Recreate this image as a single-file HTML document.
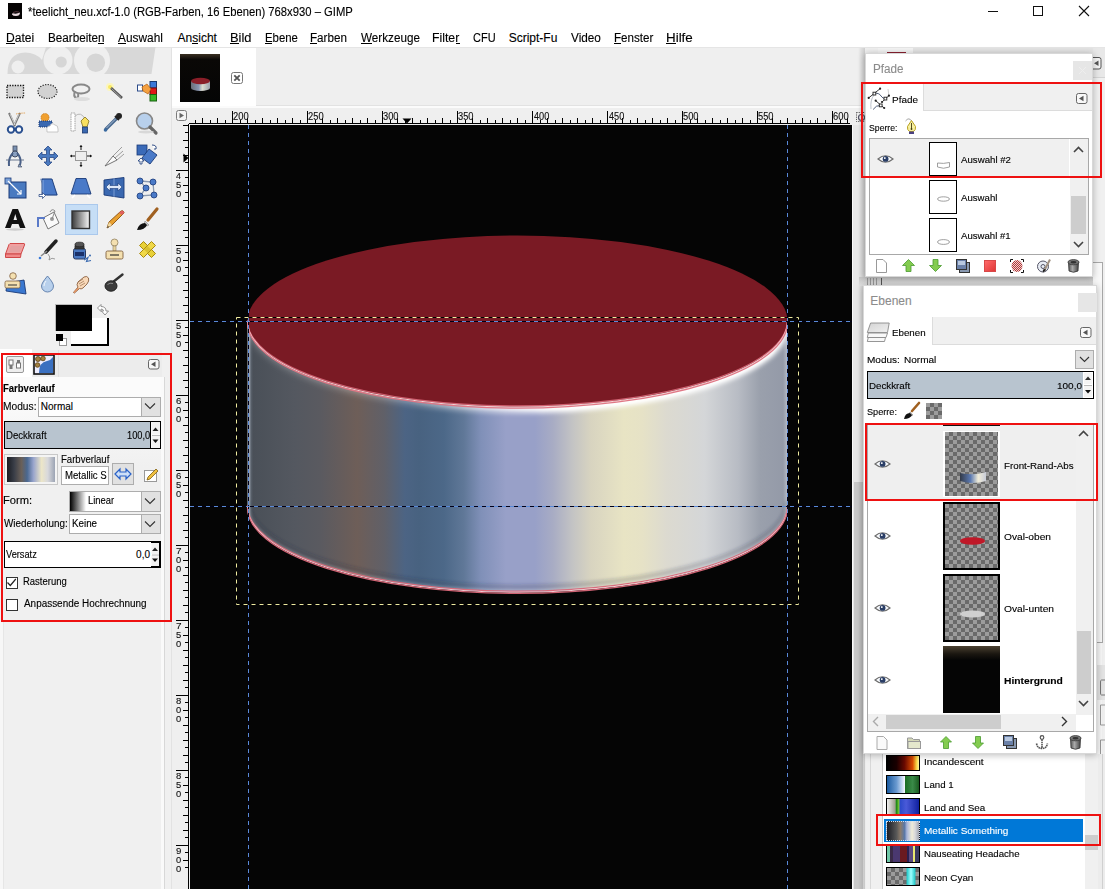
<!DOCTYPE html>
<html><head><meta charset="utf-8">
<style>
*{margin:0;padding:0;box-sizing:border-box}
html,body{width:1105px;height:889px;overflow:hidden;background:#f0f0f0;font-family:"Liberation Sans",sans-serif;color:#000;position:relative}
.a{position:absolute}
.t{position:absolute;white-space:nowrap;font-size:12px;line-height:1;transform-origin:0 0;-webkit-text-stroke:0.12px currentColor}
svg{position:absolute;overflow:visible}
</style></head><body>

<div class="a" style="left:0px;top:0px;width:1105px;height:24px;background:#fff"></div>
<div class="a" style="left:8px;top:3px;width:14px;height:16px;background:#050303"></div>
<svg style="left:8px;top:3px" width="14" height="16"><defs><filter id="tib"><feGaussianBlur stdDeviation="0.6"/></filter></defs><path d="M4 11.5 Q4 9.5 6 10.5 Q9 11 12 9.5 Q12 13 8 13 Q5 13 4 11.5Z" fill="#e8d8dc" filter="url(#tib)"/><path d="M5 9.5 Q8 8 11 9" stroke="#503038" fill="none"/></svg>
<div class="t" style="left:28.33px;top:6.38px;font-size:12px;color:#000;transform:scaleX(0.9383);">*teelicht_neu.xcf-1.0 (RGB-Farben, 16 Ebenen) 768x930 – GIMP</div>
<div class="a" style="left:988px;top:11px;width:10px;height:1px;background:#111"></div>
<div class="a" style="left:1033px;top:6px;width:10px;height:10px;border:1px solid #111"></div>
<svg style="left:1079px;top:6px" width="10" height="10"><path d="M0 0L10 10M10 0L0 10" stroke="#111" stroke-width="1.1"/></svg>
<div class="a" style="left:0px;top:24px;width:1105px;height:23px;background:#fff"></div>
<div class="a" style="left:0px;top:47px;width:1105px;height:1px;background:#e5e5e5"></div>
<div class="t" style="left:6.33px;top:32.38px;font-size:12px;color:#000;transform:scaleX(1.0069);">Datei</div>
<div class="a" style="left:6.3px;top:43px;width:8.7px;height:1px;background:#000"></div>
<div class="t" style="left:47.56px;top:32.38px;font-size:12px;color:#000;transform:scaleX(0.9755);">Bearbeiten</div>
<div class="a" style="left:97.7px;top:43px;width:6.5px;height:1px;background:#000"></div>
<div class="t" style="left:118.40px;top:32.38px;font-size:12px;color:#000;transform:scaleX(0.9892);">Auswahl</div>
<div class="a" style="left:118.4px;top:43px;width:7.9px;height:1px;background:#000"></div>
<div class="t" style="left:177.60px;top:32.38px;font-size:12px;color:#000;">Ansicht</div>
<div class="a" style="left:192.2px;top:43px;width:6.0px;height:1px;background:#000"></div>
<div class="t" style="left:230.27px;top:32.38px;font-size:12px;color:#000;transform:scaleX(1.0746);">Bild</div>
<div class="a" style="left:230.3px;top:43px;width:8.6px;height:1px;background:#000"></div>
<div class="t" style="left:264.79px;top:32.38px;font-size:12px;color:#000;transform:scaleX(0.9494);">Ebene</div>
<div class="a" style="left:264.8px;top:43px;width:7.6px;height:1px;background:#000"></div>
<div class="t" style="left:310.27px;top:32.38px;font-size:12px;color:#000;transform:scaleX(0.9713);">Farben</div>
<div class="a" style="left:310.3px;top:43px;width:7.1px;height:1px;background:#000"></div>
<div class="t" style="left:360.94px;top:32.38px;font-size:12px;color:#000;transform:scaleX(0.9736);">Werkzeuge</div>
<div class="a" style="left:360.9px;top:43px;width:11.0px;height:1px;background:#000"></div>
<div class="t" style="left:432.32px;top:32.38px;font-size:12px;color:#000;transform:scaleX(1.0235);">Filter</div>
<div class="a" style="left:455.5px;top:43px;width:4.1px;height:1px;background:#000"></div>
<div class="t" style="left:472.85px;top:32.38px;font-size:12px;color:#000;transform:scaleX(0.9154);">CFU</div>
<div class="t" style="left:508.66px;top:32.38px;font-size:12px;color:#000;">Script-Fu</div>
<div class="t" style="left:571.04px;top:32.38px;font-size:12px;color:#000;transform:scaleX(0.9820);">Video</div>
<div class="t" style="left:614.17px;top:32.38px;font-size:12px;color:#000;transform:scaleX(0.9676);">Fenster</div>
<div class="a" style="left:614.2px;top:43px;width:7.1px;height:1px;background:#000"></div>
<div class="t" style="left:666.23px;top:32.38px;font-size:12px;color:#000;transform:scaleX(1.1156);">Hilfe</div>
<div class="a" style="left:666.2px;top:43px;width:9.7px;height:1px;background:#000"></div>
<div class="a" style="left:161px;top:377px;width:3px;height:512px;background:#fafafa"></div>
<div class="a" style="left:164px;top:377px;width:1px;height:512px;background:#d8d8d8"></div>
<div class="a" style="left:171px;top:48px;width:1px;height:841px;background:#e2e2e2"></div>
<div class="a" style="left:0px;top:622px;width:3px;height:267px;background:#f7f7f7"></div>
<div class="a" style="left:3px;top:622px;width:1px;height:267px;background:#e6e6e6"></div>
<svg style="left:0;top:44px" width="165" height="32" viewBox="0 44 165 32">
<defs><clipPath id="wbc"><rect x="0" y="47" width="165" height="27"/></clipPath></defs>
<g clip-path="url(#wbc)">
<path d="M7.5 74 Q7.5 53 25 52.5 Q36 52.5 42 60 L46 47 L155.5 47 L151.5 74 Z" fill="#d8d8d8"/>
<circle cx="18" cy="67" r="6.5" fill="#efefef"/>
<circle cx="58" cy="60" r="14.5" fill="#efefef"/>
<circle cx="61.2" cy="62" r="5.6" fill="#d6d6d6"/>
<circle cx="92" cy="60.5" r="18" fill="#efefef"/>
<circle cx="95.8" cy="62.7" r="9.3" fill="#d6d6d6"/>
</g></svg>
<svg style="left:6px;top:84px" width="19" height="15" viewBox="0 0 19 15"><rect x="1" y="1.5" width="16.5" height="12" fill="#d2d2d2" stroke="#111" stroke-width="1.3" stroke-dasharray="1.3 1.3"/></svg>
<svg style="left:37px;top:83px" width="22" height="17" viewBox="0 0 22 17"><ellipse cx="10.5" cy="8.5" rx="9.5" ry="7" fill="#d2d2d2" stroke="#222" stroke-width="1.2" stroke-dasharray="1.2 1.4"/></svg>
<svg style="left:70px;top:83px" width="22" height="18" viewBox="0 0 22 18"><ellipse cx="11" cy="6" rx="8.5" ry="4.5" fill="none" stroke="#888" stroke-width="2"/><path d="M5 8 Q3 13 6 15 Q9 15 8 11" fill="none" stroke="#888" stroke-width="2"/><ellipse cx="12" cy="16" rx="8" ry="2" fill="#ddd"/></svg>
<svg style="left:105px;top:82px" width="20" height="18" viewBox="0 0 20 18"><circle cx="5" cy="5" r="4" fill="#fff8b0" opacity="0.8"/><circle cx="5" cy="5" r="2" fill="#f8e860"/><path d="M6 6 L17 16" stroke="#555" stroke-width="2.6"/><path d="M6.5 6.5 L16 15.5" stroke="#aaa" stroke-width="0.9"/></svg>
<svg style="left:137px;top:81px" width="22" height="21" viewBox="0 0 22 21"><rect x="13" y="0.5" width="6.5" height="6.5" fill="#3a78d8" stroke="#1a3a70"/><rect x="13" y="7" width="6.5" height="6.5" fill="#e01818" stroke="#701010"/><rect x="13" y="13.5" width="6.5" height="6.5" fill="#38b828" stroke="#186010"/><rect x="0.5" y="4" width="5" height="6" fill="#fff" stroke="#2a4a8a"/><path d="M5 6 L10 3 L14 8 L11 13 L6 10 Z" fill="#f4a040" stroke="#b06010" stroke-width="0.7"/></svg>
<svg style="left:6px;top:112px" width="21" height="22" viewBox="0 0 21 22"><path d="M3 1 L9 14 M14 1 L8 14" stroke="#777" stroke-width="2" fill="none"/><path d="M4 2 L9 13 M13 2 L8 13" stroke="#ddd" stroke-width="0.8"/><path d="M10 2 Q14 1 20 1" stroke="#e09030" stroke-dasharray="1 1" fill="none"/><circle cx="5" cy="17.5" r="3.2" fill="#fff" stroke="#2a5090" stroke-width="2"/><circle cx="13" cy="17.5" r="3.2" fill="#fff" stroke="#2a5090" stroke-width="2"/></svg>
<svg style="left:38px;top:112px" width="21" height="21" viewBox="0 0 21 21"><circle cx="7" cy="5.5" r="4" fill="#f0a030" stroke="#c07010" stroke-width="0.8" stroke-dasharray="1 0.8"/><rect x="1" y="9" width="13" height="6" fill="#3a68b0" stroke="#1a3870" stroke-dasharray="1 1"/><path d="M9 19 Q8 14 12 14 Q13 10 17 13 Q20 13 20 17 L20 20 L9 20 Z" fill="#fff" stroke="#bbb" stroke-width="0.8"/></svg>
<svg style="left:70px;top:112px" width="21" height="22" viewBox="0 0 21 22"><rect x="1" y="1" width="4" height="18" fill="#fff" stroke="#999" stroke-width="0.9" stroke-dasharray="1.5 0.8"/><path d="M5 4 Q11 -1 15 7" fill="none" stroke="#aaa" stroke-width="0.8"/><path d="M11 9 L15 5 L19 9 L17 15 L13 15 Z" fill="#f8e060" stroke="#807020" stroke-width="0.8"/><rect x="12.5" y="15" width="5" height="6" fill="#3a68b0" stroke="#1a3870" stroke-width="0.8"/></svg>
<svg style="left:103px;top:112px" width="20" height="20" viewBox="0 0 20 20"><path d="M3 17 L14 6" stroke="#4a6a90" stroke-width="3.2" stroke-linecap="round"/><path d="M3.5 16 L13 6.5" stroke="#b0c4dc" stroke-width="0.9"/><circle cx="16" cy="4" r="3" fill="#222"/><path d="M12 4 L16 8" stroke="#222" stroke-width="2"/><circle cx="2.5" cy="18" r="1.8" fill="#3a6aa0"/></svg>
<svg style="left:135px;top:112px" width="23" height="22" viewBox="0 0 23 22"><circle cx="9.5" cy="9" r="8" fill="#b8d0ec" stroke="#888" stroke-width="1.6"/><path d="M15 15 L21 21" stroke="#666" stroke-width="3.2" stroke-linecap="round"/><ellipse cx="11" cy="20" rx="8" ry="1.5" fill="#d8d8d8"/></svg>
<svg style="left:6px;top:145px" width="19" height="23" viewBox="0 0 19 23"><rect x="7" y="1" width="4" height="5" fill="#7890b0" stroke="#404a60" stroke-width="0.8"/><circle cx="9" cy="9" r="3" fill="#8aa0c0" stroke="#404a60"/><path d="M7 8 Q2 13 3 21 M11 8 Q16 13 14 20" fill="none" stroke="#4a6088" stroke-width="2"/><path d="M0 15 L18 15" stroke="#4a5a78" stroke-width="0.8"/><path d="M13 19 L16 22 L12 22 Z" fill="#8aa0c0" stroke="#404a60" stroke-width="0.6"/></svg>
<svg style="left:37px;top:145px" width="22" height="22" viewBox="0 0 22 22"><path d="M11 1 L15 5 L12.5 5 L12.5 9.5 L17 9.5 L17 7 L21 11 L17 15 L17 12.5 L12.5 12.5 L12.5 17 L15 17 L11 21 L7 17 L9.5 17 L9.5 12.5 L5 12.5 L5 15 L1 11 L5 7 L5 9.5 L9.5 9.5 L9.5 5 L7 5 Z" fill="#4a7ac0" stroke="#2a4a88" stroke-width="0.8"/></svg>
<svg style="left:70px;top:145px" width="22" height="22" viewBox="0 0 22 22"><rect x="5.5" y="6.5" width="11" height="9" fill="#eee" stroke="#999"/><path d="M11 0.5 L11 5 M11 17 L11 21.5 M0.5 11 L5 11 M17 11 L21.5 11" stroke="#111" stroke-width="1"/><path d="M9.5 2 L11 0 L12.5 2Z M9.5 20 L11 22 L12.5 20Z M2 9.5 L0 11 L2 12.5Z M20 9.5 L22 11 L20 12.5Z" fill="#111"/></svg>
<svg style="left:103px;top:145px" width="22" height="22" viewBox="0 0 22 22"><path d="M2 21 L10 11 L14 15 Z" fill="#fafafa" stroke="#666" stroke-width="0.9"/><path d="M10 11 L19 2 M12 13 L20 6 M14 15 L21 9" stroke="#888" stroke-width="0.8" fill="none"/></svg>
<svg style="left:136px;top:144px" width="22" height="24" viewBox="0 0 22 24"><rect x="1" y="1" width="10" height="10" fill="#3a6ab8" stroke="#1a3a78" stroke-width="0.8"/><path d="M6 14 L13 5 L21 11 L14 20 Z" fill="#4a7ac8" stroke="#1a3a78" stroke-width="0.9"/><path d="M16 1 Q21 1 20 5 L18 5" fill="#fff" stroke="#1a3a78" stroke-width="0.9"/><path d="M2 17 L5 14 L8 17 L6 17 L6 20 L4 20 L4 17 Z" fill="#fff" stroke="#1a3a78" stroke-width="0.8"/></svg>
<svg style="left:4px;top:177px" width="23" height="22" viewBox="0 0 23 22"><rect x="5" y="5" width="17" height="16" fill="#4a7ac0" stroke="#1a3a78"/><rect x="1" y="1" width="6" height="6" fill="#7aa0d8" stroke="#1a3a78" stroke-width="0.8"/><path d="M4 4 L17 17" stroke="#fff" stroke-width="1.2"/><path d="M17 13 L17 17 L13 17" stroke="#fff" stroke-width="1.2" fill="none"/></svg>
<svg style="left:38px;top:177px" width="21" height="22" viewBox="0 0 21 22"><path d="M2.5 2 L13 2 L19.5 18 L9 18 Z" fill="#dde6f4" stroke="#8aa0c8" stroke-width="0.8"/><path d="M4 2 L14 2 L19 18 L4 18 Z" fill="#4a7ac8" stroke="#1a3a78" stroke-width="0.9"/><path d="M5 3 L5 17" stroke="#9ab8e8" stroke-width="0.8"/><path d="M1 17.5 L4.5 17.5 L4.5 15.5 L7.5 18.5 L4.5 21.5 L4.5 19.5 L1 19.5 Z" fill="#fff" stroke="#1a3a78" stroke-width="0.7"/></svg>
<svg style="left:70px;top:177px" width="22" height="22" viewBox="0 0 22 22"><path d="M6 1.5 L16 1.5 L21 17 L1 17 Z" fill="#4a7ac8" stroke="#1a3a78" stroke-width="0.9"/><path d="M2 21 L5 18 M17 18 L20 21" stroke="#fff" stroke-width="1.5"/></svg>
<svg style="left:103px;top:177px" width="22" height="21" viewBox="0 0 22 21"><path d="M1 3 L21 0.5 L21 21 L1 18 Z" fill="#3a68b0" stroke="#1a3a78" stroke-width="0.9"/><path d="M11 1 L11 20" stroke="#8aaadc" stroke-width="0.8"/><path d="M3 10 L7 6 L7 8.5 L15 8.5 L15 6 L19 10 L15 14 L15 11.5 L7 11.5 L7 14 Z" fill="#dde8f8" stroke="#1a3a78" stroke-width="0.6"/></svg>
<svg style="left:136px;top:177px" width="22" height="22" viewBox="0 0 22 22"><path d="M4 4 L17 5 L18 18 L4 19 L10 11 Z" fill="none" stroke="#8a9ab0" stroke-width="1.3"/><g fill="#4a7ac8" stroke="#1a3a78" stroke-width="0.8"><circle cx="4" cy="4" r="3"/><circle cx="17" cy="5" r="3"/><circle cx="10" cy="11" r="3"/><circle cx="4" cy="19" r="3"/><circle cx="18" cy="18" r="3"/></g></svg>
<div class="a" style="left:65px;top:204px;width:33px;height:31px;background:#c6def6;border:1px solid #aac8ec"></div>
<svg style="left:4px;top:208px" width="23" height="23" viewBox="0 0 23 23"><path d="M1 20 L8.5 1 L14 1 L21.5 20 L16 20 L14.5 16 L8 16 L6.5 20 Z M9.5 12 L13 12 L11.3 6 Z" fill="#111" fill-rule="evenodd"/><ellipse cx="11" cy="21.5" rx="9" ry="1.2" fill="#ccc"/></svg>
<svg style="left:36px;top:208px" width="24" height="24" viewBox="0 0 24 24"><path d="M7 10 L18 4 L23 15 L12 21 Z" fill="#fafafa" stroke="#777" stroke-width="1"/><circle cx="16" cy="11" r="2" fill="#999"/><path d="M14 4 Q16 0 19 3 L16 11" fill="none" stroke="#888" stroke-width="1"/><path d="M2 19 L2 10 L9 10" fill="none" stroke="#5a7ac8" stroke-width="2"/></svg>
<svg style="left:71px;top:210px" width="20" height="20" viewBox="0 0 20 20"><defs><linearGradient id="tgg" x1="0" x2="1"><stop offset="0" stop-color="#3a3a3a"/><stop offset="1" stop-color="#f8f8f8"/></linearGradient></defs><rect x="1" y="1" width="17.5" height="17.5" fill="url(#tgg)" stroke="#333" stroke-width="1.4"/></svg>
<svg style="left:104px;top:209px" width="22" height="22" viewBox="0 0 22 22"><path d="M3 19 L5 13 L17 2 Q19 1 20 3 L20 4 L8 16 Z" fill="#e8a030" stroke="#8a5010" stroke-width="0.9"/><path d="M17 2 Q19 1 20 3 L20 4 L18 6 L15 4Z" fill="#e06060"/><path d="M3 19 L5 13 L8 16 Z" fill="#f0d8a0"/><path d="M3 19 L4 17 L5 18Z" fill="#222"/></svg>
<svg style="left:136px;top:208px" width="22" height="24" viewBox="0 0 22 24"><path d="M12 12 L21 1" stroke="#a06020" stroke-width="3.2" stroke-linecap="round"/><path d="M9 13 L13 17 L11 18 L8 16Z" fill="#ccc" stroke="#888" stroke-width="0.6"/><path d="M1 22 Q3 15 9 15 L11 17 Q9 22 1 22Z" fill="#111"/></svg>
<svg style="left:4px;top:242px" width="22" height="18" viewBox="0 0 22 18"><path d="M6 1.5 L20 1.5 Q21 1.5 20.5 3 L17 12 L1.5 12 L5 2.5Z" fill="#f0a0a0" stroke="#d04848" stroke-width="1"/><path d="M1.5 12 L17 12 L16.5 15.5 L1.5 15.5Z" fill="#f08888" stroke="#d04848" stroke-width="1"/><path d="M7 4 L18 4 L15.5 10 L5 10Z" fill="#d8a0a0" opacity="0.5"/></svg>
<svg style="left:37px;top:239px" width="22" height="23" viewBox="0 0 22 23"><path d="M9 13 L19 2" stroke="#222" stroke-width="3.5" stroke-linecap="round"/><path d="M4 17 L10 12" stroke="#888" stroke-width="1.5"/><path d="M11 15 Q14 18 12 21 Q15 18 18 20" fill="none" stroke="#888" stroke-width="0.8"/><circle cx="3" cy="19" r="1.3" fill="#3a7ad8"/></svg>
<svg style="left:70px;top:240px" width="22" height="24" viewBox="0 0 22 24"><rect x="3.5" y="8.5" width="12" height="10.5" rx="2" fill="#4a78c0" stroke="#2a3a60"/><rect x="5" y="12" width="9" height="4" fill="#1a3068"/><path d="M5 9 L5 5.5 Q9.5 3 14 5.5 L14 9Z" fill="#3a3a3a" stroke="#222" stroke-width="0.8"/><ellipse cx="9.5" cy="4.5" rx="4.5" ry="2.3" fill="#555" stroke="#222" stroke-width="0.8"/><path d="M14 20 L18 17.5 L16.5 21.5 L21 20.5" fill="none" stroke="#3a6ab0" stroke-width="1.2"/><circle cx="20" cy="15.5" r="1" fill="#3a6ab0"/></svg>
<svg style="left:104px;top:238px" width="21" height="24" viewBox="0 0 21 24"><circle cx="10.5" cy="4.5" r="3.5" fill="#f4e0b0" stroke="#908060" stroke-width="0.8"/><rect x="9" y="8" width="3" height="5" fill="#e8d4a0" stroke="#908060" stroke-width="0.6"/><rect x="2" y="13" width="17" height="8" rx="1.5" fill="#f4e0b0" stroke="#806040" stroke-width="0.9"/><path d="M6 17 L15 17" stroke="#333" stroke-width="1.2"/></svg>
<svg style="left:136px;top:238px" width="23" height="24" viewBox="0 0 23 24"><path d="M3.5 7.5 L7.5 3.5 L19.5 15.5 L15.5 19.5 Z" fill="#e8d038" stroke="#a88a10" stroke-width="1" stroke-linejoin="round"/><path d="M15.5 3.5 L19.5 7.5 L7.5 19.5 L3.5 15.5 Z" fill="#f0d848" stroke="#a88a10" stroke-width="1" stroke-linejoin="round"/><rect x="9" y="9" width="5" height="5" transform="rotate(45 11.5 11.5)" fill="#d8c030"/></svg>
<svg style="left:4px;top:272px" width="24" height="25" viewBox="0 0 24 25"><path d="M3 11 L20 8 L22 22 L2 19 Z" fill="#3a78d0" stroke="#1a3a78" stroke-width="0.9"/><circle cx="9" cy="4" r="3.3" fill="#f4e0b0" stroke="#806040" stroke-width="0.8"/><rect x="1" y="9" width="15" height="7" rx="1.5" fill="#f4e0b0" stroke="#806040" stroke-width="0.8"/><path d="M4 13 L13 13" stroke="#333"/></svg>
<svg style="left:40px;top:275px" width="15" height="17" viewBox="0 0 15 17"><path d="M7.5 1 Q13.5 8 13.5 11 A6 6 0 0 1 1.5 11 Q1.5 8 7.5 1 Z" fill="#b8d0ec" stroke="#5a7aa8" stroke-width="0.9"/><path d="M4 11 Q4 8 6 6" stroke="#fff" stroke-width="0.8" fill="none"/></svg>
<svg style="left:72px;top:275px" width="18" height="19" viewBox="0 0 18 19"><path d="M1.5 17.5 L6 12 Q4 10 6 7 L12 2 Q15 0.5 16.5 3 Q17.5 6 15 9 L11 13 Q9 14.5 7.5 13.5 L2.5 18 Z" fill="#f8d8b8" stroke="#8a6040" stroke-width="0.9"/><path d="M6 7 L11 4 M7 9 L12 6 M8 11 L13 8" stroke="#8a6040" stroke-width="0.6"/><path d="M2 17.5 L6.5 13" stroke="#e09060" stroke-width="1.4"/></svg>
<svg style="left:104px;top:273px" width="20" height="20" viewBox="0 0 20 20"><path d="M9 9 L18.5 1.5" stroke="#333" stroke-width="2.4" stroke-linecap="round"/><ellipse cx="7" cy="13" rx="6" ry="5.2" fill="#3c3c3c" stroke="#222"/><path d="M3.5 11.5 Q6 9.5 9 10.5" stroke="#8a8a8a" fill="none"/></svg>
<div class="a" style="left:71px;top:318px;width:38px;height:28px;background:#fff;border-right:2px solid #000;border-bottom:2px solid #000"></div>
<div class="a" style="left:55px;top:304px;width:37px;height:27px;background:#000;border-top:1px solid #bbb;border-left:1px solid #bbb"></div>
<div class="a" style="left:59px;top:338px;width:8px;height:8px;background:#fff;border:1px solid #999"></div>
<div class="a" style="left:56px;top:334px;width:7px;height:7px;background:#000"></div>
<svg style="left:96px;top:303px" width="14" height="14" viewBox="0 0 14 14"><path d="M1.5 5 L5 1.5 L5 3.5 Q10 3.5 10 8 L12.5 8 L9 12 L5.5 8 L7.5 8 Q7.5 6 5 6 L5 8.5 Z" fill="#fff" stroke="#888" stroke-width="0.9"/></svg>
<div class="a" style="left:0px;top:349px;width:32px;height:28px;background:#fff"></div>
<div class="a" style="left:32px;top:350px;width:130px;height:27px;background:#ececec"></div>
<div class="a" style="left:58px;top:350px;width:1px;height:27px;background:#e0e0e0"></div>
<div class="a" style="left:3px;top:377px;width:158px;height:90px;background:linear-gradient(#fbfbfb,#fbfbfb 20%,#f0f0f0)"></div>
<svg style="left:6px;top:356px" width="18" height="17" viewBox="0 0 18 17"><rect x="0.5" y="0.5" width="17" height="16" rx="1.5" fill="#eee" stroke="#999"/><rect x="3" y="4" width="4" height="5" fill="#fff" stroke="#777"/><rect x="3.5" y="9" width="3" height="4" fill="#777"/><rect x="11" y="4" width="3" height="3" fill="#777"/><rect x="10.5" y="7" width="4" height="5" fill="#fff" stroke="#777"/></svg>
<svg style="left:33px;top:354px" width="22" height="21" viewBox="0 0 22 21"><rect x="1" y="1" width="20" height="19" fill="#eef" stroke="#111" stroke-width="1.6"/><path d="M6 19 Q6 8 14 7 Q18 6 20 3 L20 19 Z" fill="#3a70c0"/><circle cx="5" cy="5" r="2.5" fill="#a08040" stroke="#604010" stroke-width="0.8"/><circle cx="10" cy="4.5" r="2.3" fill="#a08040" stroke="#604010" stroke-width="0.8"/><circle cx="4.5" cy="11" r="2.3" fill="#a08040" stroke="#604010" stroke-width="0.8"/></svg>
<svg style="left:148px;top:359px" width="12" height="11" viewBox="0 0 12 11"><rect x="0.5" y="0.5" width="10.5" height="9.5" rx="2" fill="#f8f8f8" stroke="#666"/><path d="M3 5.2 L7.5 2.5 L7.5 8Z" fill="#555"/></svg>
<div class="t" style="left:3.18px;top:384.10px;font-size:10px;color:#000;font-weight:bold;transform:scaleX(0.9508);">Farbverlauf</div>
<div class="t" style="left:2.98px;top:402.10px;font-size:10px;color:#000;transform:scaleX(1.0209);">Modus:</div>
<div class="a" style="left:38px;top:397px;width:123px;height:20px;background:#fff;border:1px solid #adadad"></div>
<div class="a" style="left:141px;top:398px;width:19px;height:18px;background:#e1e1e1;border-left:1px solid #adadad"></div>
<svg style="left:144px;top:402px" width="12" height="8"><path d="M1 1.5 L6 6.5 L11 1.5" fill="none" stroke="#333" stroke-width="1.1"/></svg>
<div class="t" style="left:40.80px;top:402.10px;font-size:10px;color:#000;">Normal</div>
<div class="a" style="left:4px;top:421px;width:147px;height:28px;background:#b8c4cf;border:1px solid #000"></div>
<div class="t" style="left:5.53px;top:430.60px;font-size:10px;color:#000;transform:scaleX(0.9601);">Deckkraft</div>
<div class="t" style="left:126.81px;top:430.60px;font-size:10px;color:#000;transform:scaleX(0.9247);">100,0</div>
<div class="a" style="left:151px;top:421px;width:10px;height:28px;background:#fff;border:1px solid #000;border-left:none"></div>
<svg style="left:151px;top:421px" width="10" height="28"><rect x="0.5" y="1" width="8.5" height="12.5" fill="#f2f2f2"/><rect x="0.5" y="14.5" width="8.5" height="12.5" fill="#f2f2f2"/><path d="M1.5 9.9 L4.5 6.4 L7.5 9.9Z" fill="#222"/><path d="M1.5 18.599999999999998 L4.5 22.099999999999998 L7.5 18.599999999999998Z" fill="#111"/><rect x="1" y="14.0" width="8" height="1" fill="#bbb"/></svg>
<div class="a" style="left:4px;top:454px;width:54px;height:31px;background:#f4f4f4;border:1px solid #c8c8c8"></div>
<svg style="left:7px;top:457px" width="48" height="25"><defs><linearGradient id="mgr" x1="0" x2="1">
<stop offset="0" stop-color="#1a1c22"/><stop offset="0.15" stop-color="#3a3e48"/><stop offset="0.3" stop-color="#6a6058"/><stop offset="0.42" stop-color="#4a6890"/><stop offset="0.55" stop-color="#98a4cc"/><stop offset="0.72" stop-color="#ece6c8"/><stop offset="0.85" stop-color="#d8d8dc"/><stop offset="1" stop-color="#9ca4b4"/></linearGradient></defs><rect width="48" height="25" fill="url(#mgr)"/></svg>
<div class="t" style="left:60.64px;top:455.10px;font-size:10px;color:#000;transform:scaleX(0.9558);">Farbverlauf</div>
<div class="a" style="left:61px;top:466px;width:48px;height:19px;background:#fff;border:1px solid #adadad"></div>
<div class="t" style="left:64.73px;top:471.10px;font-size:10px;color:#000;transform:scaleX(0.9620);">Metallic S</div>
<div class="a" style="left:112px;top:463px;width:22px;height:22px;background:#e1e1e1;border:1px solid #adadad"></div>
<svg style="left:114px;top:467px" width="18" height="14"><path d="M1 7 L6 2 L6 5 L12 5 L12 2 L17 7 L12 12 L12 9 L6 9 L6 12 Z" fill="#cfe0f8" stroke="#2a62c8" stroke-width="1.2"/></svg>
<svg style="left:143px;top:467px" width="16" height="17"><rect x="1.5" y="3.5" width="12" height="11" fill="#fff" stroke="#999"/><path d="M4 13 L5 10 L13 2 L15 4 L7 12 Z" fill="#f0c040" stroke="#806010" stroke-width="0.8"/></svg>
<div class="t" style="left:2.91px;top:495.60px;font-size:10px;color:#000;transform:scaleX(1.1148);">Form:</div>
<div class="a" style="left:69px;top:491px;width:92px;height:21px;background:#fff;border:1px solid #adadad"></div>
<svg style="left:70px;top:492px" width="16" height="19"><defs><linearGradient id="lng" x1="0" x2="1"><stop offset="0" stop-color="#000"/><stop offset="1" stop-color="#fff"/></linearGradient></defs><rect width="16" height="19" fill="url(#lng)"/></svg>
<div class="a" style="left:141px;top:492px;width:19px;height:19px;background:#e1e1e1;border-left:1px solid #adadad"></div>
<svg style="left:144px;top:497px" width="12" height="8"><path d="M1 1.5 L6 6.5 L11 1.5" fill="none" stroke="#333" stroke-width="1.1"/></svg>
<div class="t" style="left:88.05px;top:495.60px;font-size:10px;color:#000;transform:scaleX(0.9403);">Linear</div>
<div class="t" style="left:3.75px;top:518.60px;font-size:10px;color:#000;transform:scaleX(0.9874);">Wiederholung:</div>
<div class="a" style="left:69px;top:514px;width:92px;height:20px;background:#fff;border:1px solid #adadad"></div>
<div class="a" style="left:141px;top:515px;width:19px;height:18px;background:#e1e1e1;border-left:1px solid #adadad"></div>
<svg style="left:144px;top:520px" width="12" height="8"><path d="M1 1.5 L6 6.5 L11 1.5" fill="none" stroke="#333" stroke-width="1.1"/></svg>
<div class="t" style="left:71.92px;top:518.60px;font-size:10px;color:#000;transform:scaleX(0.9794);">Keine</div>
<div class="a" style="left:4px;top:541px;width:157px;height:27px;background:#fff;border:1px solid #000"></div>
<div class="t" style="left:5.65px;top:550.10px;font-size:10px;color:#000;transform:scaleX(0.9238);">Versatz</div>
<div class="t" style="left:136.10px;top:550.10px;font-size:10px;color:#000;">0,0</div>
<div class="a" style="left:151px;top:542px;width:9px;height:25px;background:#fff;border:1px solid #000;border-left:none"></div>
<svg style="left:151px;top:542px" width="9" height="25"><rect x="0.5" y="1" width="7.5" height="11.0" fill="#f2f2f2"/><rect x="0.5" y="13.0" width="7.5" height="11.0" fill="#f2f2f2"/><path d="M1.0 9.0 L4.0 5.5 L7.0 9.0Z" fill="#222"/><path d="M1.0 16.5 L4.0 20.0 L7.0 16.5Z" fill="#111"/><rect x="1" y="12.5" width="7" height="1" fill="#bbb"/></svg>
<div class="a" style="left:5.5px;top:576.5px;width:12px;height:12px;background:#fff;border:1px solid #333"></div>
<svg style="left:6px;top:577px" width="11" height="11"><path d="M1.5 5.5 L4.3 8.5 L9.8 2" fill="none" stroke="#222" stroke-width="1.2"/></svg>
<div class="t" style="left:22.84px;top:577.10px;font-size:10px;color:#000;transform:scaleX(0.9485);">Rasterung</div>
<div class="a" style="left:5.5px;top:598.5px;width:12px;height:12px;background:#fff;border:1px solid #333"></div>
<div class="t" style="left:23.60px;top:599.10px;font-size:10px;color:#000;transform:scaleX(0.9931);">Anpassende Hochrechnung</div>
<div class="a" style="left:172px;top:48px;width:690px;height:60px;background:#f0f0f0"></div>
<div class="a" style="left:256px;top:48px;width:606px;height:57px;background:#efefef"></div>
<div class="a" style="left:256px;top:105px;width:606px;height:1px;background:#e2e2e2"></div>
<div class="a" style="left:172px;top:48px;width:84px;height:60px;background:#fff"></div>
<svg style="left:180px;top:54px" width="40" height="48">
<defs><linearGradient id="thb" x1="0" y1="0" x2="0" y2="1"><stop offset="0" stop-color="#3a3022"/><stop offset="0.12" stop-color="#0a0806"/><stop offset="1" stop-color="#050505"/></linearGradient>
<linearGradient id="ths" x1="0" y1="0" x2="1" y2="0"><stop offset="0" stop-color="#6a6e78"/><stop offset="0.4" stop-color="#8a96b0"/><stop offset="0.6" stop-color="#dcdcd0"/><stop offset="1" stop-color="#9aa0ac"/></linearGradient></defs>
<rect width="40" height="48" fill="url(#thb)"/>
<path d="M11 27 L11 34 A9.5 3 0 0 0 30 34 L30 27 Z" fill="url(#ths)"/>
<ellipse cx="20.5" cy="27" rx="9.5" ry="3.2" fill="#8a1e28"/>
</svg>
<svg style="left:231px;top:72px" width="12" height="12"><rect x="0.5" y="0.5" width="11" height="11" rx="2" fill="#fff" stroke="#777"/><path d="M3.3 3.3L8.7 8.7M8.7 3.3L3.3 8.7" stroke="#555" stroke-width="1.8"/></svg>
<div class="a" style="left:172px;top:108px;width:690px;height:781px;background:#efefef"></div>
<div class="a" style="left:172px;top:106px;width:690px;height:2px;background:#fbfbfb"></div>
<svg style="left:176px;top:110px" width="11" height="11"><rect x="0.5" y="0.5" width="10" height="10" rx="2" fill="#f4f4f4" stroke="#7a7a7a"/><path d="M3.5 2.8L8 5.5L3.5 8.2Z" fill="#666"/></svg>
<div class="a" style="left:190px;top:125px;width:662px;height:764px;background:#050505"></div>
<div class="a" style="left:189px;top:123px;width:661px;height:1px;background:#000"></div>
<div class="a" style="left:188px;top:124px;width:1px;height:765px;background:#000"></div>
<svg style="left:0;top:0" width="1105" height="889"><g fill="#000"><rect x="195" y="120" width="1" height="3"/><rect x="202" y="118" width="1" height="5"/><rect x="210" y="120" width="1" height="3"/><rect x="217" y="118" width="1" height="5"/><rect x="225" y="120" width="1" height="3"/><rect x="232" y="111" width="1" height="12"/><rect x="240" y="120" width="1" height="3"/><rect x="247" y="118" width="1" height="5"/><rect x="255" y="120" width="1" height="3"/><rect x="262" y="118" width="1" height="5"/><rect x="270" y="120" width="1" height="3"/><rect x="277" y="118" width="1" height="5"/><rect x="285" y="120" width="1" height="3"/><rect x="292" y="118" width="1" height="5"/><rect x="300" y="120" width="1" height="3"/><rect x="307" y="111" width="1" height="12"/><rect x="315" y="120" width="1" height="3"/><rect x="322" y="118" width="1" height="5"/><rect x="330" y="120" width="1" height="3"/><rect x="337" y="118" width="1" height="5"/><rect x="345" y="120" width="1" height="3"/><rect x="352" y="118" width="1" height="5"/><rect x="360" y="120" width="1" height="3"/><rect x="367" y="118" width="1" height="5"/><rect x="375" y="120" width="1" height="3"/><rect x="382" y="111" width="1" height="12"/><rect x="390" y="120" width="1" height="3"/><rect x="397" y="118" width="1" height="5"/><rect x="405" y="120" width="1" height="3"/><rect x="412" y="118" width="1" height="5"/><rect x="420" y="120" width="1" height="3"/><rect x="427" y="118" width="1" height="5"/><rect x="435" y="120" width="1" height="3"/><rect x="442" y="118" width="1" height="5"/><rect x="450" y="120" width="1" height="3"/><rect x="457" y="111" width="1" height="12"/><rect x="465" y="120" width="1" height="3"/><rect x="472" y="118" width="1" height="5"/><rect x="480" y="120" width="1" height="3"/><rect x="487" y="118" width="1" height="5"/><rect x="495" y="120" width="1" height="3"/><rect x="502" y="118" width="1" height="5"/><rect x="510" y="120" width="1" height="3"/><rect x="517" y="118" width="1" height="5"/><rect x="525" y="120" width="1" height="3"/><rect x="532" y="111" width="1" height="12"/><rect x="540" y="120" width="1" height="3"/><rect x="547" y="118" width="1" height="5"/><rect x="555" y="120" width="1" height="3"/><rect x="562" y="118" width="1" height="5"/><rect x="570" y="120" width="1" height="3"/><rect x="577" y="118" width="1" height="5"/><rect x="585" y="120" width="1" height="3"/><rect x="592" y="118" width="1" height="5"/><rect x="600" y="120" width="1" height="3"/><rect x="607" y="111" width="1" height="12"/><rect x="615" y="120" width="1" height="3"/><rect x="622" y="118" width="1" height="5"/><rect x="630" y="120" width="1" height="3"/><rect x="637" y="118" width="1" height="5"/><rect x="645" y="120" width="1" height="3"/><rect x="652" y="118" width="1" height="5"/><rect x="660" y="120" width="1" height="3"/><rect x="667" y="118" width="1" height="5"/><rect x="675" y="120" width="1" height="3"/><rect x="682" y="111" width="1" height="12"/><rect x="690" y="120" width="1" height="3"/><rect x="697" y="118" width="1" height="5"/><rect x="705" y="120" width="1" height="3"/><rect x="712" y="118" width="1" height="5"/><rect x="720" y="120" width="1" height="3"/><rect x="727" y="118" width="1" height="5"/><rect x="735" y="120" width="1" height="3"/><rect x="742" y="118" width="1" height="5"/><rect x="750" y="120" width="1" height="3"/><rect x="757" y="111" width="1" height="12"/><rect x="765" y="120" width="1" height="3"/><rect x="772" y="118" width="1" height="5"/><rect x="780" y="120" width="1" height="3"/><rect x="787" y="118" width="1" height="5"/><rect x="795" y="120" width="1" height="3"/><rect x="802" y="118" width="1" height="5"/><rect x="810" y="120" width="1" height="3"/><rect x="817" y="118" width="1" height="5"/><rect x="825" y="120" width="1" height="3"/><rect x="832" y="111" width="1" height="12"/><rect x="840" y="120" width="1" height="3"/><rect x="847" y="118" width="1" height="5"/></g></svg>
<div class="t" style="left:233.23px;top:112.10px;font-size:10px;color:#111;transform:scaleX(0.9367);">200</div>
<div class="t" style="left:308.23px;top:112.10px;font-size:10px;color:#111;transform:scaleX(0.9367);">250</div>
<div class="t" style="left:383.33px;top:112.10px;font-size:10px;color:#111;transform:scaleX(0.9308);">300</div>
<div class="t" style="left:458.33px;top:112.10px;font-size:10px;color:#111;transform:scaleX(0.9308);">350</div>
<div class="t" style="left:533.52px;top:112.10px;font-size:10px;color:#111;transform:scaleX(0.9193);">400</div>
<div class="t" style="left:608.52px;top:112.10px;font-size:10px;color:#111;transform:scaleX(0.9193);">450</div>
<div class="t" style="left:683.33px;top:112.10px;font-size:10px;color:#111;transform:scaleX(0.9308);">500</div>
<div class="t" style="left:758.33px;top:112.10px;font-size:10px;color:#111;transform:scaleX(0.9308);">550</div>
<div class="t" style="left:833.23px;top:112.10px;font-size:10px;color:#111;transform:scaleX(0.9367);">600</div>
<svg style="left:402px;top:118px" width="10" height="6"><path d="M0.5 0.5L9.5 0.5L5 5.5Z" fill="#000"/></svg>
<svg style="left:0;top:0" width="1105" height="889"><g fill="#000"><rect x="183" y="125" width="6" height="1"/><rect x="185" y="132" width="4" height="1"/><rect x="183" y="140" width="6" height="1"/><rect x="185" y="147" width="4" height="1"/><rect x="183" y="155" width="6" height="1"/><rect x="185" y="162" width="4" height="1"/><rect x="176" y="170" width="13" height="1"/><rect x="185" y="177" width="4" height="1"/><rect x="183" y="185" width="6" height="1"/><rect x="185" y="192" width="4" height="1"/><rect x="183" y="200" width="6" height="1"/><rect x="185" y="207" width="4" height="1"/><rect x="183" y="215" width="6" height="1"/><rect x="185" y="222" width="4" height="1"/><rect x="183" y="230" width="6" height="1"/><rect x="185" y="237" width="4" height="1"/><rect x="176" y="245" width="13" height="1"/><rect x="185" y="252" width="4" height="1"/><rect x="183" y="260" width="6" height="1"/><rect x="185" y="267" width="4" height="1"/><rect x="183" y="275" width="6" height="1"/><rect x="185" y="282" width="4" height="1"/><rect x="183" y="290" width="6" height="1"/><rect x="185" y="297" width="4" height="1"/><rect x="183" y="305" width="6" height="1"/><rect x="185" y="312" width="4" height="1"/><rect x="176" y="320" width="13" height="1"/><rect x="185" y="327" width="4" height="1"/><rect x="183" y="335" width="6" height="1"/><rect x="185" y="342" width="4" height="1"/><rect x="183" y="350" width="6" height="1"/><rect x="185" y="357" width="4" height="1"/><rect x="183" y="365" width="6" height="1"/><rect x="185" y="372" width="4" height="1"/><rect x="183" y="380" width="6" height="1"/><rect x="185" y="387" width="4" height="1"/><rect x="176" y="395" width="13" height="1"/><rect x="185" y="402" width="4" height="1"/><rect x="183" y="410" width="6" height="1"/><rect x="185" y="417" width="4" height="1"/><rect x="183" y="425" width="6" height="1"/><rect x="185" y="432" width="4" height="1"/><rect x="183" y="440" width="6" height="1"/><rect x="185" y="447" width="4" height="1"/><rect x="183" y="455" width="6" height="1"/><rect x="185" y="462" width="4" height="1"/><rect x="176" y="470" width="13" height="1"/><rect x="185" y="477" width="4" height="1"/><rect x="183" y="485" width="6" height="1"/><rect x="185" y="492" width="4" height="1"/><rect x="183" y="500" width="6" height="1"/><rect x="185" y="507" width="4" height="1"/><rect x="183" y="515" width="6" height="1"/><rect x="185" y="522" width="4" height="1"/><rect x="183" y="530" width="6" height="1"/><rect x="185" y="537" width="4" height="1"/><rect x="176" y="545" width="13" height="1"/><rect x="185" y="552" width="4" height="1"/><rect x="183" y="560" width="6" height="1"/><rect x="185" y="567" width="4" height="1"/><rect x="183" y="575" width="6" height="1"/><rect x="185" y="582" width="4" height="1"/><rect x="183" y="590" width="6" height="1"/><rect x="185" y="597" width="4" height="1"/><rect x="183" y="605" width="6" height="1"/><rect x="185" y="612" width="4" height="1"/><rect x="176" y="620" width="13" height="1"/><rect x="185" y="627" width="4" height="1"/><rect x="183" y="635" width="6" height="1"/><rect x="185" y="642" width="4" height="1"/><rect x="183" y="650" width="6" height="1"/><rect x="185" y="657" width="4" height="1"/><rect x="183" y="665" width="6" height="1"/><rect x="185" y="672" width="4" height="1"/><rect x="183" y="680" width="6" height="1"/><rect x="185" y="687" width="4" height="1"/><rect x="176" y="695" width="13" height="1"/><rect x="185" y="702" width="4" height="1"/><rect x="183" y="710" width="6" height="1"/><rect x="185" y="717" width="4" height="1"/><rect x="183" y="725" width="6" height="1"/><rect x="185" y="732" width="4" height="1"/><rect x="183" y="740" width="6" height="1"/><rect x="185" y="747" width="4" height="1"/><rect x="183" y="755" width="6" height="1"/><rect x="185" y="762" width="4" height="1"/><rect x="176" y="770" width="13" height="1"/><rect x="185" y="777" width="4" height="1"/><rect x="183" y="785" width="6" height="1"/><rect x="185" y="792" width="4" height="1"/><rect x="183" y="800" width="6" height="1"/><rect x="185" y="807" width="4" height="1"/><rect x="183" y="815" width="6" height="1"/><rect x="185" y="822" width="4" height="1"/><rect x="183" y="830" width="6" height="1"/><rect x="185" y="837" width="4" height="1"/><rect x="176" y="845" width="13" height="1"/><rect x="185" y="852" width="4" height="1"/><rect x="183" y="860" width="6" height="1"/><rect x="185" y="867" width="4" height="1"/></g></svg>
<div class="t" style="left:176.32px;top:171.50px;font-size:9.3px;color:#111;transform:scaleX(0.9488);">4</div>
<div class="t" style="left:176.12px;top:180.50px;font-size:9.3px;color:#111;transform:scaleX(1.0187);">5</div>
<div class="t" style="left:176.12px;top:189.50px;font-size:9.3px;color:#111;transform:scaleX(1.0081);">0</div>
<div class="t" style="left:176.12px;top:246.50px;font-size:9.3px;color:#111;transform:scaleX(1.0187);">5</div>
<div class="t" style="left:176.12px;top:255.50px;font-size:9.3px;color:#111;transform:scaleX(1.0081);">0</div>
<div class="t" style="left:176.12px;top:264.50px;font-size:9.3px;color:#111;transform:scaleX(1.0081);">0</div>
<div class="t" style="left:176.12px;top:321.50px;font-size:9.3px;color:#111;transform:scaleX(1.0187);">5</div>
<div class="t" style="left:176.12px;top:330.50px;font-size:9.3px;color:#111;transform:scaleX(1.0187);">5</div>
<div class="t" style="left:176.12px;top:339.50px;font-size:9.3px;color:#111;transform:scaleX(1.0081);">0</div>
<div class="t" style="left:176.02px;top:396.50px;font-size:9.3px;color:#111;transform:scaleX(1.0406);">6</div>
<div class="t" style="left:176.12px;top:405.50px;font-size:9.3px;color:#111;transform:scaleX(1.0081);">0</div>
<div class="t" style="left:176.12px;top:414.50px;font-size:9.3px;color:#111;transform:scaleX(1.0081);">0</div>
<div class="t" style="left:176.02px;top:471.50px;font-size:9.3px;color:#111;transform:scaleX(1.0406);">6</div>
<div class="t" style="left:176.12px;top:480.50px;font-size:9.3px;color:#111;transform:scaleX(1.0187);">5</div>
<div class="t" style="left:176.12px;top:489.50px;font-size:9.3px;color:#111;transform:scaleX(1.0081);">0</div>
<div class="t" style="left:176.01px;top:546.50px;font-size:9.3px;color:#111;transform:scaleX(1.0635);">7</div>
<div class="t" style="left:176.12px;top:555.50px;font-size:9.3px;color:#111;transform:scaleX(1.0081);">0</div>
<div class="t" style="left:176.12px;top:564.50px;font-size:9.3px;color:#111;transform:scaleX(1.0081);">0</div>
<div class="t" style="left:176.01px;top:621.50px;font-size:9.3px;color:#111;transform:scaleX(1.0635);">7</div>
<div class="t" style="left:176.12px;top:630.50px;font-size:9.3px;color:#111;transform:scaleX(1.0187);">5</div>
<div class="t" style="left:176.12px;top:639.50px;font-size:9.3px;color:#111;transform:scaleX(1.0081);">0</div>
<div class="t" style="left:176.07px;top:696.50px;font-size:9.3px;color:#111;transform:scaleX(1.0295);">8</div>
<div class="t" style="left:176.12px;top:705.50px;font-size:9.3px;color:#111;transform:scaleX(1.0081);">0</div>
<div class="t" style="left:176.12px;top:714.50px;font-size:9.3px;color:#111;transform:scaleX(1.0081);">0</div>
<div class="t" style="left:176.07px;top:771.50px;font-size:9.3px;color:#111;transform:scaleX(1.0295);">8</div>
<div class="t" style="left:176.12px;top:780.50px;font-size:9.3px;color:#111;transform:scaleX(1.0187);">5</div>
<div class="t" style="left:176.12px;top:789.50px;font-size:9.3px;color:#111;transform:scaleX(1.0081);">0</div>
<div class="t" style="left:176.06px;top:846.50px;font-size:9.3px;color:#111;transform:scaleX(1.0406);">9</div>
<div class="t" style="left:176.12px;top:855.50px;font-size:9.3px;color:#111;transform:scaleX(1.0081);">0</div>
<div class="t" style="left:176.12px;top:864.50px;font-size:9.3px;color:#111;transform:scaleX(1.0081);">0</div>
<svg style="left:183px;top:153px" width="6" height="10"><path d="M0.5 0.5L5.5 5L0.5 9.5Z" fill="#000"/></svg>
<svg style="left:855px;top:111px" width="12" height="12"><rect x="1.5" y="1.5" width="9" height="9" fill="none" stroke="#444" stroke-dasharray="1 1.2"/><circle cx="6.5" cy="6.5" r="3" fill="none" stroke="#556" stroke-width="1.2"/></svg>
<svg style="left:0;top:0" width="1105" height="889">
<defs>
<linearGradient id="sideg" gradientUnits="userSpaceOnUse" x1="247.5" y1="0" x2="787.5" y2="0"><stop offset="0.0000" stop-color="#c8ccd0"/><stop offset="0.0031" stop-color="#a0a8b4"/><stop offset="0.0065" stop-color="#5a626c"/><stop offset="0.0102" stop-color="#4a5058"/><stop offset="0.0880" stop-color="#545860"/><stop offset="0.1343" stop-color="#5a5a60"/><stop offset="0.2028" stop-color="#6e5e58"/><stop offset="0.2528" stop-color="#606068"/><stop offset="0.2917" stop-color="#4c6484"/><stop offset="0.3176" stop-color="#486280"/><stop offset="0.3639" stop-color="#4c6888"/><stop offset="0.4009" stop-color="#607898"/><stop offset="0.4324" stop-color="#8090b8"/><stop offset="0.4787" stop-color="#98a0c8"/><stop offset="0.5324" stop-color="#98a0c8"/><stop offset="0.5657" stop-color="#a8acc4"/><stop offset="0.6028" stop-color="#c4c4c4"/><stop offset="0.6361" stop-color="#d8d4c0"/><stop offset="0.6972" stop-color="#e8e4c4"/><stop offset="0.7306" stop-color="#e6e2c6"/><stop offset="0.7769" stop-color="#dcdad0"/><stop offset="0.8472" stop-color="#d4d6d8"/><stop offset="0.9083" stop-color="#b8bcc4"/><stop offset="0.9491" stop-color="#9aa0ac"/><stop offset="0.9917" stop-color="#949aa8"/><stop offset="0.9972" stop-color="#aab0bc"/><stop offset="1.0000" stop-color="#c0c4cc"/></linearGradient>
<linearGradient id="hlg" gradientUnits="userSpaceOnUse" x1="247.5" y1="0" x2="787.5" y2="0"><stop offset="0" stop-color="#fff" stop-opacity="0.08"/><stop offset="0.3" stop-color="#fff" stop-opacity="0.15"/><stop offset="0.45" stop-color="#fff" stop-opacity="0.45"/><stop offset="0.6" stop-color="#fff" stop-opacity="0.95"/><stop offset="0.97" stop-color="#fff" stop-opacity="0.9"/><stop offset="1" stop-color="#fff" stop-opacity="0.5"/></linearGradient>
<clipPath id="sidec"><path d="M247.5 321.25 L247.5 506.5 A270 85.75 0 0 0 787.5 506.5 L787.5 321.25 A270 85.75 0 0 1 247.5 321.25 Z"/></clipPath>
<filter id="bl3" x="-10%" y="-50%" width="120%" height="200%"><feGaussianBlur stdDeviation="2.2"/></filter>
<filter id="bl1" x="-10%" y="-50%" width="120%" height="200%"><feGaussianBlur stdDeviation="0.8"/></filter>
<filter id="bl2" x="-10%" y="-50%" width="120%" height="200%"><feGaussianBlur stdDeviation="1.8"/></filter>
<clipPath id="canc"><rect x="190" y="125" width="662" height="764"/></clipPath>
</defs>
<g clip-path="url(#canc)">
<path d="M247.5 321.25 L247.5 506.5 A270 85.75 0 0 0 787.5 506.5 L787.5 321.25 A270 85.75 0 0 1 247.5 321.25 Z" fill="url(#sideg)"/>
<g clip-path="url(#sidec)">
<path d="M247.5 321.25 A270 85.75 0 0 0 787.5 321.25" transform="translate(0,3)" fill="none" stroke="url(#hlg)" stroke-width="7" filter="url(#bl3)"/><path d="M247.5 321.25 A270 85.75 0 0 0 787.5 321.25" transform="translate(0,2)" fill="none" stroke="url(#hlg)" stroke-width="3" filter="url(#bl1)"/>
<path d="M247.5 506.5 A270 85.75 0 0 0 787.5 506.5" transform="translate(0,-5)" fill="none" stroke="#203038" stroke-opacity="0.18" stroke-width="6" filter="url(#bl2)"/>
<path d="M247.5 506.5 A270 85.75 0 0 0 787.5 506.5" transform="translate(0,-1.5)" fill="none" stroke="#e8f0f0" stroke-opacity="0.35" stroke-width="2" filter="url(#bl2)"/>
</g>
<ellipse cx="517.5" cy="321.25" rx="270" ry="85.75" fill="#7a1a24"/>
<path d="M247.5 321.25 A270 85.75 0 0 0 787.5 321.25" transform="translate(0,-1.1)" fill="none" stroke="#d06070" stroke-width="1.2"/>
<path d="M247.5 321.25 A270 85.75 0 0 0 787.5 321.25" transform="translate(0,0.1)" fill="none" stroke="#f8d0d4" stroke-width="1.1"/>
<path d="M247.5 321.25 A270 85.75 0 0 0 787.5 321.25" transform="translate(0,1.2)" fill="none" stroke="#e07886" stroke-width="1.2"/>
<path d="M247.5 506.5 A270 85.75 0 0 0 787.5 506.5" transform="translate(0,-1.1)" fill="none" stroke="#d86c7c" stroke-width="1.2"/>
<path d="M247.5 506.5 A270 85.75 0 0 0 787.5 506.5" transform="translate(0,0.1)" fill="none" stroke="#f6c8d0" stroke-width="1.1"/>
<path d="M247.5 506.5 A270 85.75 0 0 0 787.5 506.5" transform="translate(0,1.2)" fill="none" stroke="#d06474" stroke-width="1.2"/>
</g>
</svg>
<svg style="left:0;top:0" width="1105" height="889"><g clip-path="url(#canc)">
<line x1="248.5" y1="125" x2="248.5" y2="889" stroke="#000018" /><line x1="248.5" y1="125" x2="248.5" y2="889" stroke="#5a8ad8" stroke-dasharray="4 4"/><line x1="787.5" y1="125" x2="787.5" y2="889" stroke="#000018" /><line x1="787.5" y1="125" x2="787.5" y2="889" stroke="#5a8ad8" stroke-dasharray="4 4"/><line x1="190" y1="321.5" x2="852" y2="321.5" stroke="#000018"/><line x1="190" y1="321.5" x2="852" y2="321.5" stroke="#5a8ad8" stroke-dasharray="4 4"/><line x1="190" y1="506.5" x2="852" y2="506.5" stroke="#000018"/><line x1="190" y1="506.5" x2="852" y2="506.5" stroke="#5a8ad8" stroke-dasharray="4 4"/>
<rect x="236.5" y="317.5" width="562" height="287" fill="none" stroke="#000"/>
<rect x="236.5" y="317.5" width="562" height="287" fill="none" stroke="#eeeaa0" stroke-dasharray="4 4"/>
</g></svg>
<div class="a" style="left:853px;top:125px;width:252px;height:764px;background:#ececec"></div>
<div class="a" style="left:852px;top:125px;width:1px;height:764px;background:#fafafa"></div>
<div class="a" style="left:853px;top:125px;width:12px;height:764px;background:#e8e8e8"></div>
<div class="a" style="left:854px;top:482px;width:9px;height:407px;background:#c9c9c9"></div>
<div class="a" style="left:858px;top:48px;width:7px;height:841px;background:linear-gradient(90deg,rgba(0,0,0,0),rgba(0,0,0,0.14))"></div>
<div class="a" style="left:878px;top:48px;width:35px;height:5px;background:#f4f4f4"></div>
<div class="a" style="left:887px;top:52px;width:19px;height:1px;background:#8a2030"></div>
<div class="a" style="left:913px;top:48px;width:180px;height:5px;background:#e4e4e4"></div>
<div class="a" style="left:1093px;top:48px;width:12px;height:841px;background:#f0f0f0"></div>
<div class="a" style="left:1093px;top:48px;width:12px;height:29px;background:#e8e8e8"></div>
<div class="a" style="left:1093px;top:77px;width:12px;height:1px;background:#d4d4d4"></div>
<svg style="left:1090px;top:57px" width="12" height="13" viewBox="0 0 12 13"><rect x="0.5" y="0.5" width="10.5" height="11.5" rx="2" fill="#f4f4f4" stroke="#555"/><path d="M4 6.2 L8.5 3.5 L8.5 9Z" fill="#555"/></svg>
<div class="a" style="left:859px;top:277px;width:234px;height:9px;background:linear-gradient(#c4c4c4,#e2e2e2)"></div>
<div class="a" style="left:1093px;top:262px;width:9px;height:627px;background:#f8f8f8"></div>
<div class="a" style="left:1093px;top:262px;width:10px;height:1px;background:#a8a8a8"></div>
<div class="a" style="left:1102px;top:262px;width:1px;height:381px;background:#a8a8a8"></div>
<svg style="left:866px;top:278px" width="20" height="8"><path d="M1.5 0V8M4.5 0V8M7.5 0V8M10.5 0V8" stroke="#999"/><path d="M15.5 0V8" stroke="#555"/></svg>
<svg style="left:1097px;top:555px" width="8" height="210"><path d="M5.5 87.5 H0" fill="none" stroke="#a8a8a8"/><rect x="0" y="110" width="8" height="35" fill="#e4e4e4"/><path d="M8 125 H4.5 Q3.5 125 3.5 127 V138 Q3.5 140 4.5 140 H8" fill="none" stroke="#777"/><path d="M8 150 H3.5 V170 H8" fill="none" stroke="#999"/><path d="M8 185 H3.5 V210" fill="none" stroke="#999"/></svg>
<div class="a" style="left:866px;top:754px;width:239px;height:135px;background:#f0f0f0"></div>
<div class="a" style="left:870px;top:754px;width:1px;height:135px;background:#d8d8d8"></div>
<div class="a" style="left:882px;top:754px;width:1px;height:135px;background:#c8c8c8"></div>
<div class="a" style="left:883px;top:754px;width:202px;height:135px;background:#fff"></div>
<div class="a" style="left:1085px;top:754px;width:13px;height:135px;background:#f0f0f0"></div>
<div class="a" style="left:1085px;top:835px;width:13px;height:15px;background:#cdcdcd"></div>
<div class="a" style="left:1098px;top:754px;width:7px;height:135px;background:#ececec"></div>
<div class="a" style="left:1102px;top:754px;width:1px;height:135px;background:#d0d0d0"></div>
<div class="a" style="left:886px;top:755px;width:34px;height:16px;background:linear-gradient(90deg,#000 0%,#1a0000 30%,#6a0a00 55%,#d84a00 80%,#f8d040 92%,#fff8a0 100%);border:1px solid #000"></div>
<div class="t" style="left:923.70px;top:757.33px;font-size:9.5px;color:#000;transform:scaleX(1.0544);">Incandescent</div>
<div class="a" style="left:886px;top:775px;width:34px;height:19px;background:linear-gradient(90deg,#1a5aa0 0%,#6a9ad0 30%,#f0f4ff 55%,#186a20 55.1%,#3a8a48 80%,#1a5a20 100%);border:1px solid #000"></div>
<div class="t" style="left:923.83px;top:780.33px;font-size:9.5px;color:#000;transform:scaleX(1.0186);">Land 1</div>
<div class="a" style="left:886px;top:798px;width:34px;height:18px;background:linear-gradient(90deg,#f0f0f0 0%,#a0a090 25%,#1a8a10 30%,#8ad040 38%,#2a48c8 40%,#4a5ad8 60%,#1020a0 100%);border:1px solid #000"></div>
<div class="t" style="left:923.81px;top:802.93px;font-size:9.5px;color:#000;transform:scaleX(1.0346);">Land and Sea</div>
<div class="a" style="left:884px;top:819px;width:199px;height:23px;background:#0078d7"></div>
<div class="a" style="left:886px;top:821px;width:34px;height:20px;background:linear-gradient(90deg,#1a1c24 0%,#585858 30%,#8a7a6a 42%,#5a78a8 55%,#a8b4d8 62%,#f0ecd8 78%,#d8d8dc 88%,#a0a4b0 100%);border:1px dotted #cfe0f8"></div>
<div class="t" style="left:923.80px;top:825.53px;font-size:9.5px;color:#fff;transform:scaleX(1.0514);">Metallic Something</div>
<div class="a" style="left:886px;top:844px;width:34px;height:19px;background:linear-gradient(90deg,#70c8a8 0 8%,#3a2a48 8% 20%,#4a3870 20% 40%,#6a1a20 40% 62%,#2a2050 62% 70%,#5a4a80 70% 82%,#e8e870 82% 88%,#3a3a60 88%);border:1px solid #000"></div>
<div class="t" style="left:923.83px;top:849.03px;font-size:9.5px;color:#000;transform:scaleX(1.0171);">Nauseating Headache</div>
<div class="a" style="left:886px;top:867px;width:34px;height:19px;border:1px solid #000;background:linear-gradient(90deg,transparent 60%,#20c8c8 62%,#a0ffff 75%,#20c8c8 88%,transparent 90%),conic-gradient(#6a6a6a 25%,#9c9c9c 0 50%,#6a6a6a 0 75%,#9c9c9c 0) 0 0/8px 8px"></div>
<div class="t" style="left:923.81px;top:872.53px;font-size:9.5px;color:#000;transform:scaleX(1.0385);">Neon Cyan</div>
<div class="a" style="left:865px;top:53px;width:228px;height:224px;background:#fff;box-shadow:0 1px 7px rgba(0,0,0,0.28);border:1px solid #d8d8d8"></div>
<div class="t" style="left:872.57px;top:62.78px;font-size:12px;color:#8c8c8c;transform:scaleX(0.9725);">Pfade</div>
<div class="a" style="left:1073px;top:61px;width:19px;height:19px;background:#e6e6e6"></div>
<svg style="left:1078px;top:66px" width="9" height="9"><path d="M1 1L8 8M8 1L1 8" stroke="#eeeeee" stroke-width="1"/></svg>
<div class="a" style="left:866px;top:84px;width:226px;height:27px;background:#f0f0f0"></div>
<div class="a" style="left:866px;top:110px;width:226px;height:1px;background:#dcdcdc"></div>
<div class="a" style="left:866px;top:84px;width:58px;height:27px;background:#fff"></div>
<div class="a" style="left:923px;top:84px;width:1px;height:27px;background:#dcdcdc"></div>
<svg style="left:864px;top:84px" width="28" height="28" viewBox="0 0 28 28"><path d="M7 25 Q6 16 10 11" fill="none" stroke="#a0a8b4" stroke-width="0.7"/><path d="M24.9 11.7 L24 5" stroke="#b0b0b0" stroke-width="0.6"/><path d="M4.7 13.9 L16.1 4.7" stroke="#222" stroke-width="0.9"/><path d="M10.4 9.5 Q15 8.5 17 12 Q19 15 21.4 14.5" fill="none" stroke="#3a4a68" stroke-width="0.9"/><path d="M18 18 L24.9 11.7" stroke="#222" stroke-width="0.9"/><path d="M11.7 16.7 L20.2 24" stroke="#222" stroke-width="0.9"/><path d="M16.7 21.4 Q12 21 9.1 25.5" fill="none" stroke="#3a4a68" stroke-width="0.9"/><g fill="#fff" stroke="#222" stroke-width="0.9"><rect x="9" y="8.2" width="2.8" height="2.8"/><rect x="20" y="13.2" width="2.8" height="2.8"/><rect x="15.3" y="20" width="2.8" height="2.8"/></g><g fill="#222"><circle cx="16.1" cy="4.7" r="1.1"/><circle cx="4.7" cy="13.9" r="1.1"/><circle cx="24.9" cy="11.7" r="1.1"/><circle cx="18" cy="18" r="1.1"/><circle cx="11.7" cy="16.7" r="1.1"/><circle cx="20.2" cy="24" r="1.1"/></g></svg>
<div class="t" style="left:892.00px;top:95.13px;font-size:9.5px;color:#000;transform:scaleX(1.0463);">Pfade</div>
<svg style="left:1076px;top:93px" width="12" height="11" viewBox="0 0 12 11"><rect x="0.5" y="0.5" width="10.5" height="10" rx="2" fill="#f8f8f8" stroke="#666"/><path d="M3 5.5 L7.5 2.8 L7.5 8.2Z" fill="#555"/></svg>
<div class="t" style="left:869.31px;top:122.53px;font-size:9.5px;color:#000;transform:scaleX(0.9152);">Sperre:</div>
<svg style="left:904px;top:117px" width="14" height="18" viewBox="0 0 14 18"><path d="M1.5 4 Q5 -0.5 8 4.5" fill="none" stroke="#999" stroke-width="0.9"/><path d="M7.5 3.5 L11.5 9.5 Q12 13 9.5 14.5 L5.5 14.5 Q3 13 3.5 9.5 Z" fill="#f8f0a0" stroke="#b8a020" stroke-width="1"/><path d="M7.5 6 L7.5 12" stroke="#403a10" stroke-width="0.9"/><circle cx="7.5" cy="12" r="0.9" fill="#403a10"/><rect x="5" y="14.5" width="5" height="2.5" fill="#4a4080"/></svg>
<div class="a" style="left:869px;top:138px;width:220px;height:117px;background:#fff;border:1px solid #a8a8a8"></div>
<div class="a" style="left:870px;top:139px;width:199px;height:37px;background:#f0f0f0"></div>
<div class="a" style="left:1070px;top:139px;width:18px;height:115px;background:#f0f0f0"></div>
<div class="a" style="left:1071px;top:196px;width:15px;height:38px;background:#cdcdcd"></div>
<svg style="left:1073px;top:146px" width="11" height="7" viewBox="0 0 11 7"><path d="M1 6 L5.5 1.5 L10 6" fill="none" stroke="#444" stroke-width="1.6"/></svg>
<svg style="left:1073px;top:241px" width="11" height="7" viewBox="0 0 11 7"><path d="M1 1 L5.5 5.5 L10 1" fill="none" stroke="#444" stroke-width="1.6"/></svg>
<svg style="left:877px;top:154px" width="17" height="10" viewBox="0 0 17 10"><path d="M1 5 Q8.5 -1.5 16 5 Q8.5 11.5 1 5Z" fill="#fafcff" stroke="#6e6e6e" stroke-width="1.2"/><circle cx="8.6" cy="4.9" r="2.9" fill="#2a3e66"/><rect x="7" y="3.3" width="1.6" height="1.6" fill="#fff"/></svg>
<div class="a" style="left:929px;top:142px;width:28px;height:34px;background:#fff;border:1px solid #000"></div>
<svg style="left:936px;top:161px" width="15" height="9" viewBox="0 0 15 9"><path d="M1.5 2 L1.5 6 Q7.5 8.5 13.5 6 L13.5 1.5 Q7.5 3 1.5 2Z" fill="none" stroke="#888" stroke-width="0.8"/></svg>
<div class="t" style="left:961.20px;top:155.23px;font-size:9.5px;color:#000;transform:scaleX(1.0177);">Auswahl #2</div>
<div class="a" style="left:929px;top:180px;width:28px;height:34px;background:#fff;border:1px solid #000"></div>
<svg style="left:936px;top:195px" width="15" height="8" viewBox="0 0 15 8"><ellipse cx="7.5" cy="4" rx="6" ry="2.2" fill="none" stroke="#888" stroke-width="0.8"/></svg>
<div class="t" style="left:961.20px;top:193.33px;font-size:9.5px;color:#000;transform:scaleX(1.0144);">Auswahl</div>
<div class="a" style="left:929px;top:218px;width:28px;height:34px;background:#fff;border:1px solid #000"></div>
<svg style="left:936px;top:238px" width="15" height="8" viewBox="0 0 15 8"><ellipse cx="7.5" cy="4" rx="6" ry="2.4" fill="none" stroke="#888" stroke-width="0.8"/></svg>
<div class="t" style="left:961.20px;top:231.33px;font-size:9.5px;color:#000;transform:scaleX(1.0105);">Auswahl #1</div>
<svg style="left:875px;top:259px" width="13" height="14" viewBox="0 0 13 14"><path d="M1.5 0.5 L8 0.5 L11.5 4 L11.5 13.5 L1.5 13.5Z" fill="#fff" stroke="#999"/></svg>
<svg style="left:902px;top:259px" width="13" height="13" viewBox="0 0 13 13"><path d="M6.5 0.5 L12.5 6.5 L9 6.5 L9 12.5 L4 12.5 L4 6.5 L0.5 6.5Z" fill="#84cc50" stroke="#4a9a30" stroke-width="0.8"/></svg>
<svg style="left:929px;top:259px" width="13" height="13" viewBox="0 0 13 13"><path d="M6.5 12.5 L12.5 6.5 L9 6.5 L9 0.5 L4 0.5 L4 6.5 L0.5 6.5Z" fill="#84cc50" stroke="#4a9a30" stroke-width="0.8"/></svg>
<svg style="left:956px;top:259px" width="14" height="14" viewBox="0 0 14 14"><rect x="3.5" y="3.5" width="10" height="10" fill="#8898b0" stroke="#333"/><rect x="0.5" y="0.5" width="10" height="10" fill="#6a80a8" stroke="#333"/><rect x="2" y="2" width="7" height="4" fill="#b8c8e0"/></svg>
<div class="a" style="left:984px;top:260px;width:12px;height:12px;background:linear-gradient(135deg,#ff6a6a,#e03838);border:1px solid #d84848"></div>
<svg style="left:1010px;top:259px" width="14" height="14" viewBox="0 0 14 14"><defs><pattern id="rck" width="2" height="2" patternUnits="userSpaceOnUse"><rect width="2" height="2" fill="#f0d0d0"/><rect width="1" height="1" fill="#b03838"/><rect x="1" y="1" width="1" height="1" fill="#b03838"/></pattern></defs><ellipse cx="7" cy="7" rx="5.5" ry="6" fill="url(#rck)"/><path d="M0.5 3V0.5H3M11 0.5H13.5V3M13.5 11V13.5H11M3 13.5H0.5V11" fill="none" stroke="#111"/></svg>
<svg style="left:1037px;top:258px" width="14" height="15" viewBox="0 0 14 15"><circle cx="6" cy="8.5" r="5.5" fill="#e8ecf4" stroke="#556" stroke-width="1"/><circle cx="6" cy="8.5" r="2" fill="none" stroke="#556"/><path d="M7 13 L13 1.5" stroke="#a09080" stroke-width="2"/><path d="M6 14.5 Q5 11 8 11 L9 12Z" fill="#222"/></svg>
<svg style="left:1067px;top:259px" width="13" height="14" viewBox="0 0 13 14"><defs><linearGradient id="trg" x1="0" x2="1"><stop offset="0" stop-color="#555"/><stop offset="0.4" stop-color="#aaa"/><stop offset="1" stop-color="#444"/></linearGradient></defs><path d="M1.5 3.5 L2 12 Q6.5 14.5 11 12 L11.5 3.5Z" fill="url(#trg)" stroke="#333" stroke-width="0.8"/><ellipse cx="6.5" cy="3.2" rx="5.5" ry="2.6" fill="#777" stroke="#333" stroke-width="0.8"/><ellipse cx="6.5" cy="3.2" rx="3" ry="1.2" fill="#333"/></svg>
<div class="a" style="left:863px;top:285px;width:234px;height:469px;background:#fff;box-shadow:0 1px 7px rgba(0,0,0,0.28);border:1px solid #d8d8d8"></div>
<div class="t" style="left:870.34px;top:295.38px;font-size:12px;color:#8c8c8c;">Ebenen</div>
<div class="a" style="left:1078px;top:293px;width:19px;height:19px;background:#e6e6e6"></div>
<div class="a" style="left:864px;top:317px;width:232px;height:28px;background:#f0f0f0"></div>
<div class="a" style="left:864px;top:344px;width:232px;height:1px;background:#dcdcdc"></div>
<div class="a" style="left:864px;top:317px;width:68px;height:28px;background:#fff"></div>
<div class="a" style="left:932px;top:317px;width:1px;height:28px;background:#dcdcdc"></div>
<svg style="left:864px;top:320px" width="28" height="24" viewBox="0 0 28 24"><defs><linearGradient id="lyg" x1="0" y1="0" x2="1" y2="1"><stop offset="0" stop-color="#d4d4d4"/><stop offset="1" stop-color="#f0f0f0"/></linearGradient></defs><path d="M3.3 21.5 L20.5 21.5 L21.5 17.5 L4.3 17.5Z" fill="#f8f8f8" stroke="#8a8a8a" stroke-width="0.9"/><path d="M3.3 17.5 L22 17.5 L23.5 13 L4.3 13Z" fill="#f8f8f8" stroke="#8a8a8a" stroke-width="0.9"/><path d="M3.3 12.5 L23.5 12.5 L25.2 3 L6.6 3Z" fill="url(#lyg)" stroke="#8a8a8a" stroke-width="0.9"/></svg>
<div class="t" style="left:891.52px;top:327.83px;font-size:9.5px;color:#000;transform:scaleX(1.0271);">Ebenen</div>
<svg style="left:1080px;top:327px" width="12" height="11" viewBox="0 0 12 11"><rect x="0.5" y="0.5" width="10.5" height="10" rx="2" fill="#f8f8f8" stroke="#666"/><path d="M3 5.5 L7.5 2.8 L7.5 8.2Z" fill="#555"/></svg>
<div class="t" style="left:866.60px;top:355.03px;font-size:9.5px;color:#000;transform:scaleX(1.0543);">Modus:</div>
<div class="t" style="left:904.20px;top:355.03px;font-size:9.5px;color:#000;transform:scaleX(1.0543);">Normal</div>
<div class="a" style="left:1075px;top:350px;width:19px;height:19px;background:#e1e1e1;border:1px solid #adadad"></div>
<svg style="left:1079px;top:356px" width="11" height="7" viewBox="0 0 11 7"><path d="M1 1 L5.5 5.5 L10 1" fill="none" stroke="#333" stroke-width="1.1"/></svg>
<div class="a" style="left:867px;top:371px;width:217px;height:28px;background:#b8c4cf;border:1px solid #000"></div>
<div class="t" style="left:868.92px;top:380.53px;font-size:9.5px;color:#000;transform:scaleX(1.0259);">Deckkraft</div>
<div class="t" style="left:1057.25px;top:380.53px;font-size:9.5px;color:#000;transform:scaleX(1.0526);">100,0</div>
<div class="a" style="left:1083px;top:371px;width:11px;height:28px;background:#fff;border:1px solid #000;border-left:none"></div>
<svg style="left:1083px;top:372px" width="10" height="26" viewBox="0 0 10 26"><rect x="1" y="1" width="8" height="11" fill="#f4f4f4"/><rect x="1" y="14" width="8" height="11" fill="#f4f4f4"/><path d="M2 8 L5 4.5 L8 8Z" fill="#333"/><path d="M2 18 L5 21.5 L8 18Z" fill="#111"/><rect x="1" y="13" width="8" height="1" fill="#bbb"/></svg>
<div class="t" style="left:866.59px;top:407.03px;font-size:9.5px;color:#000;transform:scaleX(0.9621);">Sperre:</div>
<svg style="left:903px;top:402px" width="18" height="18" viewBox="0 0 18 18"><path d="M9 9 L16 1" stroke="#a06020" stroke-width="2.6" stroke-linecap="round"/><path d="M7 10 L10 13 L8 14 L6 12Z" fill="#ccc" stroke="#777" stroke-width="0.5"/><path d="M1 17 Q2 11 7 11 L9 13 Q7 17 1 17Z" fill="#111"/></svg>
<div class="a" style="left:926px;top:403px;width:16px;height:16px;background:conic-gradient(#6a6a6a 25%,#9c9c9c 0 50%,#6a6a6a 0 75%,#9c9c9c 0) 0 0/8px 8px"></div>
<div class="a" style="left:867px;top:424px;width:227px;height:308px;background:#fff;border:1px solid #a8a8a8;border-top:none"></div>
<div class="a" style="left:868px;top:425px;width:208px;height:74px;background:#efefef"></div>
<div class="a" style="left:943px;top:423px;width:57px;height:3px;background:#111"></div>
<div class="a" style="left:1076px;top:425px;width:17px;height:290px;background:#f0f0f0"></div>
<div class="a" style="left:1077px;top:631px;width:14px;height:63px;background:#cdcdcd"></div>
<svg style="left:1078px;top:430px" width="11" height="7" viewBox="0 0 11 7"><path d="M1 6 L5.5 1.5 L10 6" fill="none" stroke="#444" stroke-width="1.6"/></svg>
<svg style="left:1078px;top:700px" width="11" height="7" viewBox="0 0 11 7"><path d="M1 1 L5.5 5.5 L10 1" fill="none" stroke="#444" stroke-width="1.6"/></svg>
<div class="a" style="left:868px;top:714px;width:208px;height:17px;background:#f0f0f0"></div>
<div class="a" style="left:886px;top:715px;width:115px;height:14px;background:#cdcdcd"></div>
<svg style="left:872px;top:716px" width="7" height="11" viewBox="0 0 7 11"><path d="M6 1 L1.5 5.5 L6 10" fill="none" stroke="#aaa" stroke-width="1.4"/></svg>
<svg style="left:1061px;top:716px" width="7" height="11" viewBox="0 0 7 11"><path d="M1 1 L5.5 5.5 L1 10" fill="none" stroke="#333" stroke-width="1.4"/></svg>
<div class="a" style="left:943px;top:431px;width:57px;height:66px;background:#fff"></div>
<div class="a" style="left:945px;top:432px;width:53px;height:64px;background:conic-gradient(#6a6a6a 25%,#9c9c9c 0 50%,#6a6a6a 0 75%,#9c9c9c 0) 0 0/8px 8px"></div>
<svg style="left:958px;top:470px" width="30" height="16" viewBox="0 0 30 16"><defs><linearGradient id="frg" x1="0" x2="1"><stop offset="0" stop-color="#333a48"/><stop offset="0.4" stop-color="#5a78b0"/><stop offset="0.7" stop-color="#f0ecd8"/><stop offset="1" stop-color="#c8ccd8"/></linearGradient></defs><path d="M2 3 L2 11 Q15 15 28 11 L28 2 Q15 6 2 3Z" fill="url(#frg)"/></svg>
<svg style="left:874px;top:459px" width="17" height="10" viewBox="0 0 17 10"><path d="M1 5 Q8.5 -1.5 16 5 Q8.5 11.5 1 5Z" fill="#fafcff" stroke="#6e6e6e" stroke-width="1.2"/><circle cx="8.6" cy="4.9" r="2.9" fill="#2a3e66"/><rect x="7" y="3.3" width="1.6" height="1.6" fill="#fff"/></svg>
<div class="t" style="left:1003.82px;top:461.03px;font-size:9.5px;color:#000;transform:scaleX(1.0286);">Front-Rand-Abs</div>
<div class="a" style="left:943px;top:502px;width:57px;height:68px;background:#000"></div>
<div class="a" style="left:945px;top:504px;width:53px;height:64px;background:conic-gradient(#6a6a6a 25%,#9c9c9c 0 50%,#6a6a6a 0 75%,#9c9c9c 0) 0 0/8px 8px"></div>
<svg style="left:959px;top:536px" width="27" height="10" viewBox="0 0 27 10"><ellipse cx="13.5" cy="5" rx="12.5" ry="3.8" fill="#c01828"/></svg>
<svg style="left:874px;top:531px" width="17" height="10" viewBox="0 0 17 10"><path d="M1 5 Q8.5 -1.5 16 5 Q8.5 11.5 1 5Z" fill="#fafcff" stroke="#6e6e6e" stroke-width="1.2"/><circle cx="8.6" cy="4.9" r="2.9" fill="#2a3e66"/><rect x="7" y="3.3" width="1.6" height="1.6" fill="#fff"/></svg>
<div class="t" style="left:1004.14px;top:532.03px;font-size:9.5px;color:#000;transform:scaleX(1.0725);">Oval-oben</div>
<div class="a" style="left:943px;top:574px;width:57px;height:68px;background:#000"></div>
<div class="a" style="left:945px;top:576px;width:53px;height:64px;background:conic-gradient(#6a6a6a 25%,#9c9c9c 0 50%,#6a6a6a 0 75%,#9c9c9c 0) 0 0/8px 8px"></div>
<svg style="left:959px;top:609px" width="27" height="10" viewBox="0 0 27 10"><ellipse cx="13.5" cy="5" rx="12.5" ry="3.5" fill="#d0d0d0"/></svg>
<svg style="left:874px;top:603px" width="17" height="10" viewBox="0 0 17 10"><path d="M1 5 Q8.5 -1.5 16 5 Q8.5 11.5 1 5Z" fill="#fafcff" stroke="#6e6e6e" stroke-width="1.2"/><circle cx="8.6" cy="4.9" r="2.9" fill="#2a3e66"/><rect x="7" y="3.3" width="1.6" height="1.6" fill="#fff"/></svg>
<div class="t" style="left:1004.14px;top:603.53px;font-size:9.5px;color:#000;transform:scaleX(1.0769);">Oval-unten</div>
<div class="a" style="left:943px;top:646px;width:57px;height:67px;background:linear-gradient(#4a4030 0,#1a1610 8px,#050505 14px,#050505)"></div>
<svg style="left:874px;top:675px" width="17" height="10" viewBox="0 0 17 10"><path d="M1 5 Q8.5 -1.5 16 5 Q8.5 11.5 1 5Z" fill="#fafcff" stroke="#6e6e6e" stroke-width="1.2"/><circle cx="8.6" cy="4.9" r="2.9" fill="#2a3e66"/><rect x="7" y="3.3" width="1.6" height="1.6" fill="#fff"/></svg>
<div class="t" style="left:1003.93px;top:676.03px;font-size:9.5px;color:#000;font-weight:bold;transform:scaleX(1.0809);">Hintergrund</div>
<svg style="left:876px;top:736px" width="12" height="14" viewBox="0 0 12 14"><path d="M1 0.5 L7.5 0.5 L11 4 L11 13.5 L1 13.5Z" fill="#fafafa" stroke="#aaa"/></svg>
<svg style="left:907px;top:736px" width="14" height="13" viewBox="0 0 14 13"><path d="M0.5 2 L5 2 L6.5 3.5 L12.5 3.5 L12.5 12.5 L0.5 12.5Z" fill="#d4d8b8" stroke="#999"/><rect x="1" y="5.5" width="12.5" height="7" fill="#e4e8cc" stroke="#999"/></svg>
<svg style="left:940px;top:736px" width="12" height="13" viewBox="0 0 12 13"><path d="M6 0.5 L11.5 6 L8.5 6 L8.5 12.5 L3.5 12.5 L3.5 6 L0.5 6Z" fill="#84cc50" stroke="#4a9a30" stroke-width="0.8"/></svg>
<svg style="left:972px;top:736px" width="12" height="13" viewBox="0 0 12 13"><path d="M6 12.5 L11.5 7 L8.5 7 L8.5 0.5 L3.5 0.5 L3.5 7 L0.5 7Z" fill="#84cc50" stroke="#4a9a30" stroke-width="0.8"/></svg>
<svg style="left:1003px;top:735px" width="14" height="14" viewBox="0 0 14 14"><rect x="3.5" y="3.5" width="10" height="10" fill="#8898b0" stroke="#333"/><rect x="0.5" y="0.5" width="10" height="10" fill="#6a80a8" stroke="#333"/><rect x="2" y="2" width="7" height="4" fill="#b8c8e0"/></svg>
<svg style="left:1035px;top:735px" width="14" height="15" viewBox="0 0 14 15"><circle cx="7" cy="2.5" r="1.8" fill="none" stroke="#555" stroke-width="1.2"/><path d="M7 4.5 V13 M1.5 8.5 Q2.5 13.5 7 13.5 Q11.5 13.5 12.5 8.5" fill="none" stroke="#555" stroke-width="1.6" stroke-dasharray="1.6 0.6"/></svg>
<svg style="left:1069px;top:735px" width="13" height="15" viewBox="0 0 13 15"><defs><linearGradient id="trg2" x1="0" x2="1"><stop offset="0" stop-color="#555"/><stop offset="0.4" stop-color="#aaa"/><stop offset="1" stop-color="#444"/></linearGradient></defs><path d="M1.5 3.5 L2 13 Q6.5 15.5 11 13 L11.5 3.5Z" fill="url(#trg2)" stroke="#333" stroke-width="0.8"/><ellipse cx="6.5" cy="3.2" rx="5.5" ry="2.6" fill="#777" stroke="#333" stroke-width="0.8"/><ellipse cx="6.5" cy="3.2" rx="3" ry="1.2" fill="#333"/></svg>
<div class="a" style="left:861px;top:82px;width:241px;height:96px;border:2px solid #ee1111"></div>
<div class="a" style="left:865px;top:423px;width:233px;height:78px;border:2px solid #ee1111"></div>
<div class="a" style="left:876px;top:814px;width:225px;height:32px;border:2px solid #ee1111"></div>
<div class="a" style="left:1px;top:353px;width:171px;height:269px;border:2px solid #ee1111"></div>
</body></html>
